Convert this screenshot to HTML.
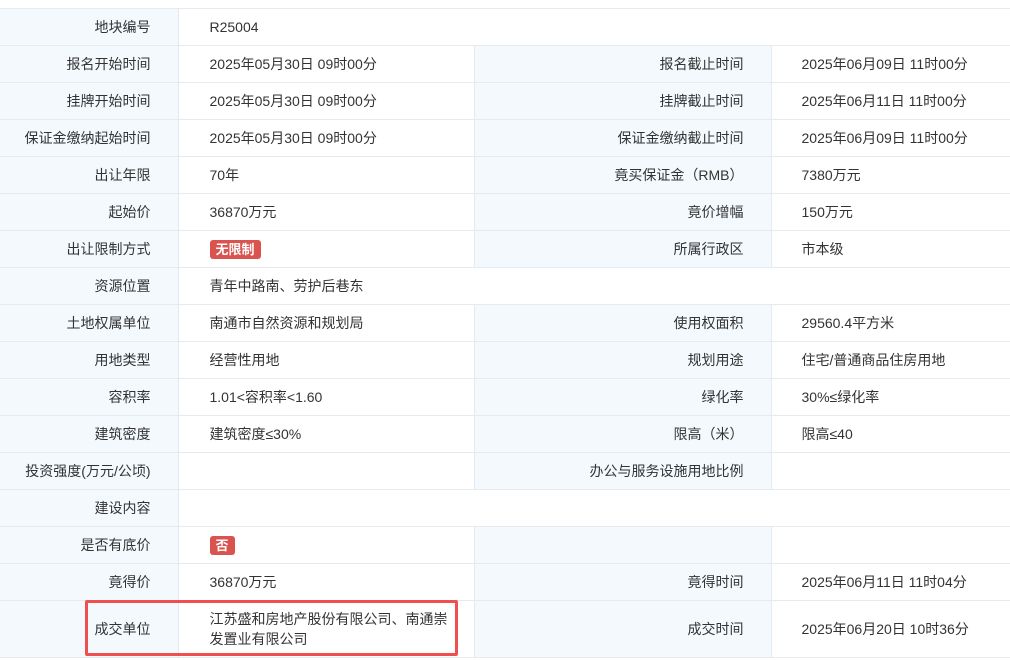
<!DOCTYPE html>
<html><head><meta charset="utf-8"><style>
*{margin:0;padding:0;box-sizing:border-box}
body{width:1010px;height:660px;background:#fff;font-family:"Liberation Sans","Noto Sans CJK SC",sans-serif;font-size:14px;color:#333;position:relative;overflow:hidden}
table{position:absolute;top:8px;left:0;width:1010px;border-collapse:collapse;table-layout:fixed}
td{height:37px;border:1px solid #e6eaee;vertical-align:middle;white-space:nowrap}
td.l{background:#f3f9fd;text-align:right;padding-right:27px}
td.v{padding-left:31px}
td.l2{background:#f3f9fd;text-align:right;padding-right:27px}
td.v2{padding-left:30px}
tr td:first-child{border-left:none}
tr td:last-child{border-right:none}
.b{display:inline-block;background:#d9534f;color:#fff;font-weight:bold;font-size:13px;line-height:19px;padding:0 6px;border-radius:3px}
.box{position:absolute;left:85px;top:600px;width:373px;height:56px;border:3px solid #f04f4f;border-radius:2px}
</style></head><body>
<table>
<colgroup><col style="width:178px"><col style="width:296px"><col style="width:297px"><col style="width:239px"></colgroup>
<tr><td class="l">地块编号</td><td class="v" colspan="3">R25004</td></tr>
<tr><td class="l">报名开始时间</td><td class="v">2025年05月30日 09时00分</td><td class="l2">报名截止时间</td><td class="v2">2025年06月09日 11时00分</td></tr>
<tr><td class="l">挂牌开始时间</td><td class="v">2025年05月30日 09时00分</td><td class="l2">挂牌截止时间</td><td class="v2">2025年06月11日 11时00分</td></tr>
<tr><td class="l">保证金缴纳起始时间</td><td class="v">2025年05月30日 09时00分</td><td class="l2">保证金缴纳截止时间</td><td class="v2">2025年06月09日 11时00分</td></tr>
<tr><td class="l">出让年限</td><td class="v">70年</td><td class="l2">竟买保证金（RMB）</td><td class="v2">7380万元</td></tr>
<tr><td class="l">起始价</td><td class="v">36870万元</td><td class="l2">竟价增幅</td><td class="v2">150万元</td></tr>
<tr><td class="l">出让限制方式</td><td class="v"><span class="b">无限制</span></td><td class="l2">所属行政区</td><td class="v2">市本级</td></tr>
<tr><td class="l">资源位置</td><td class="v" colspan="3">青年中路南、劳护后巷东</td></tr>
<tr><td class="l">土地权属单位</td><td class="v">南通市自然资源和规划局</td><td class="l2">使用权面积</td><td class="v2">29560.4平方米</td></tr>
<tr><td class="l">用地类型</td><td class="v">经营性用地</td><td class="l2">规划用途</td><td class="v2">住宅/普通商品住房用地</td></tr>
<tr><td class="l">容积率</td><td class="v">1.01&lt;容积率&lt;1.60</td><td class="l2">绿化率</td><td class="v2">30%≤绿化率</td></tr>
<tr><td class="l">建筑密度</td><td class="v">建筑密度≤30%</td><td class="l2">限高（米）</td><td class="v2">限高≤40</td></tr>
<tr><td class="l">投资强度(万元/公顷)</td><td class="v"></td><td class="l2">办公与服务设施用地比例</td><td class="v2"></td></tr>
<tr><td class="l">建设内容</td><td class="v" colspan="3"></td></tr>
<tr><td class="l">是否有底价</td><td class="v"><span class="b">否</span></td><td class="l2"></td><td class="v2"></td></tr>
<tr><td class="l">竟得价</td><td class="v">36870万元</td><td class="l2">竟得时间</td><td class="v2">2025年06月11日 11时04分</td></tr>
<tr><td class="l" style="height:57px">成交单位</td><td class="v" style="white-space:normal;line-height:20px;padding-right:20px">江苏盛和房地产股份有限公司、南通崇发置业有限公司</td><td class="l2">成交时间</td><td class="v2">2025年06月20日 10时36分</td></tr>
</table>
<div class="box"></div>
</body></html>
